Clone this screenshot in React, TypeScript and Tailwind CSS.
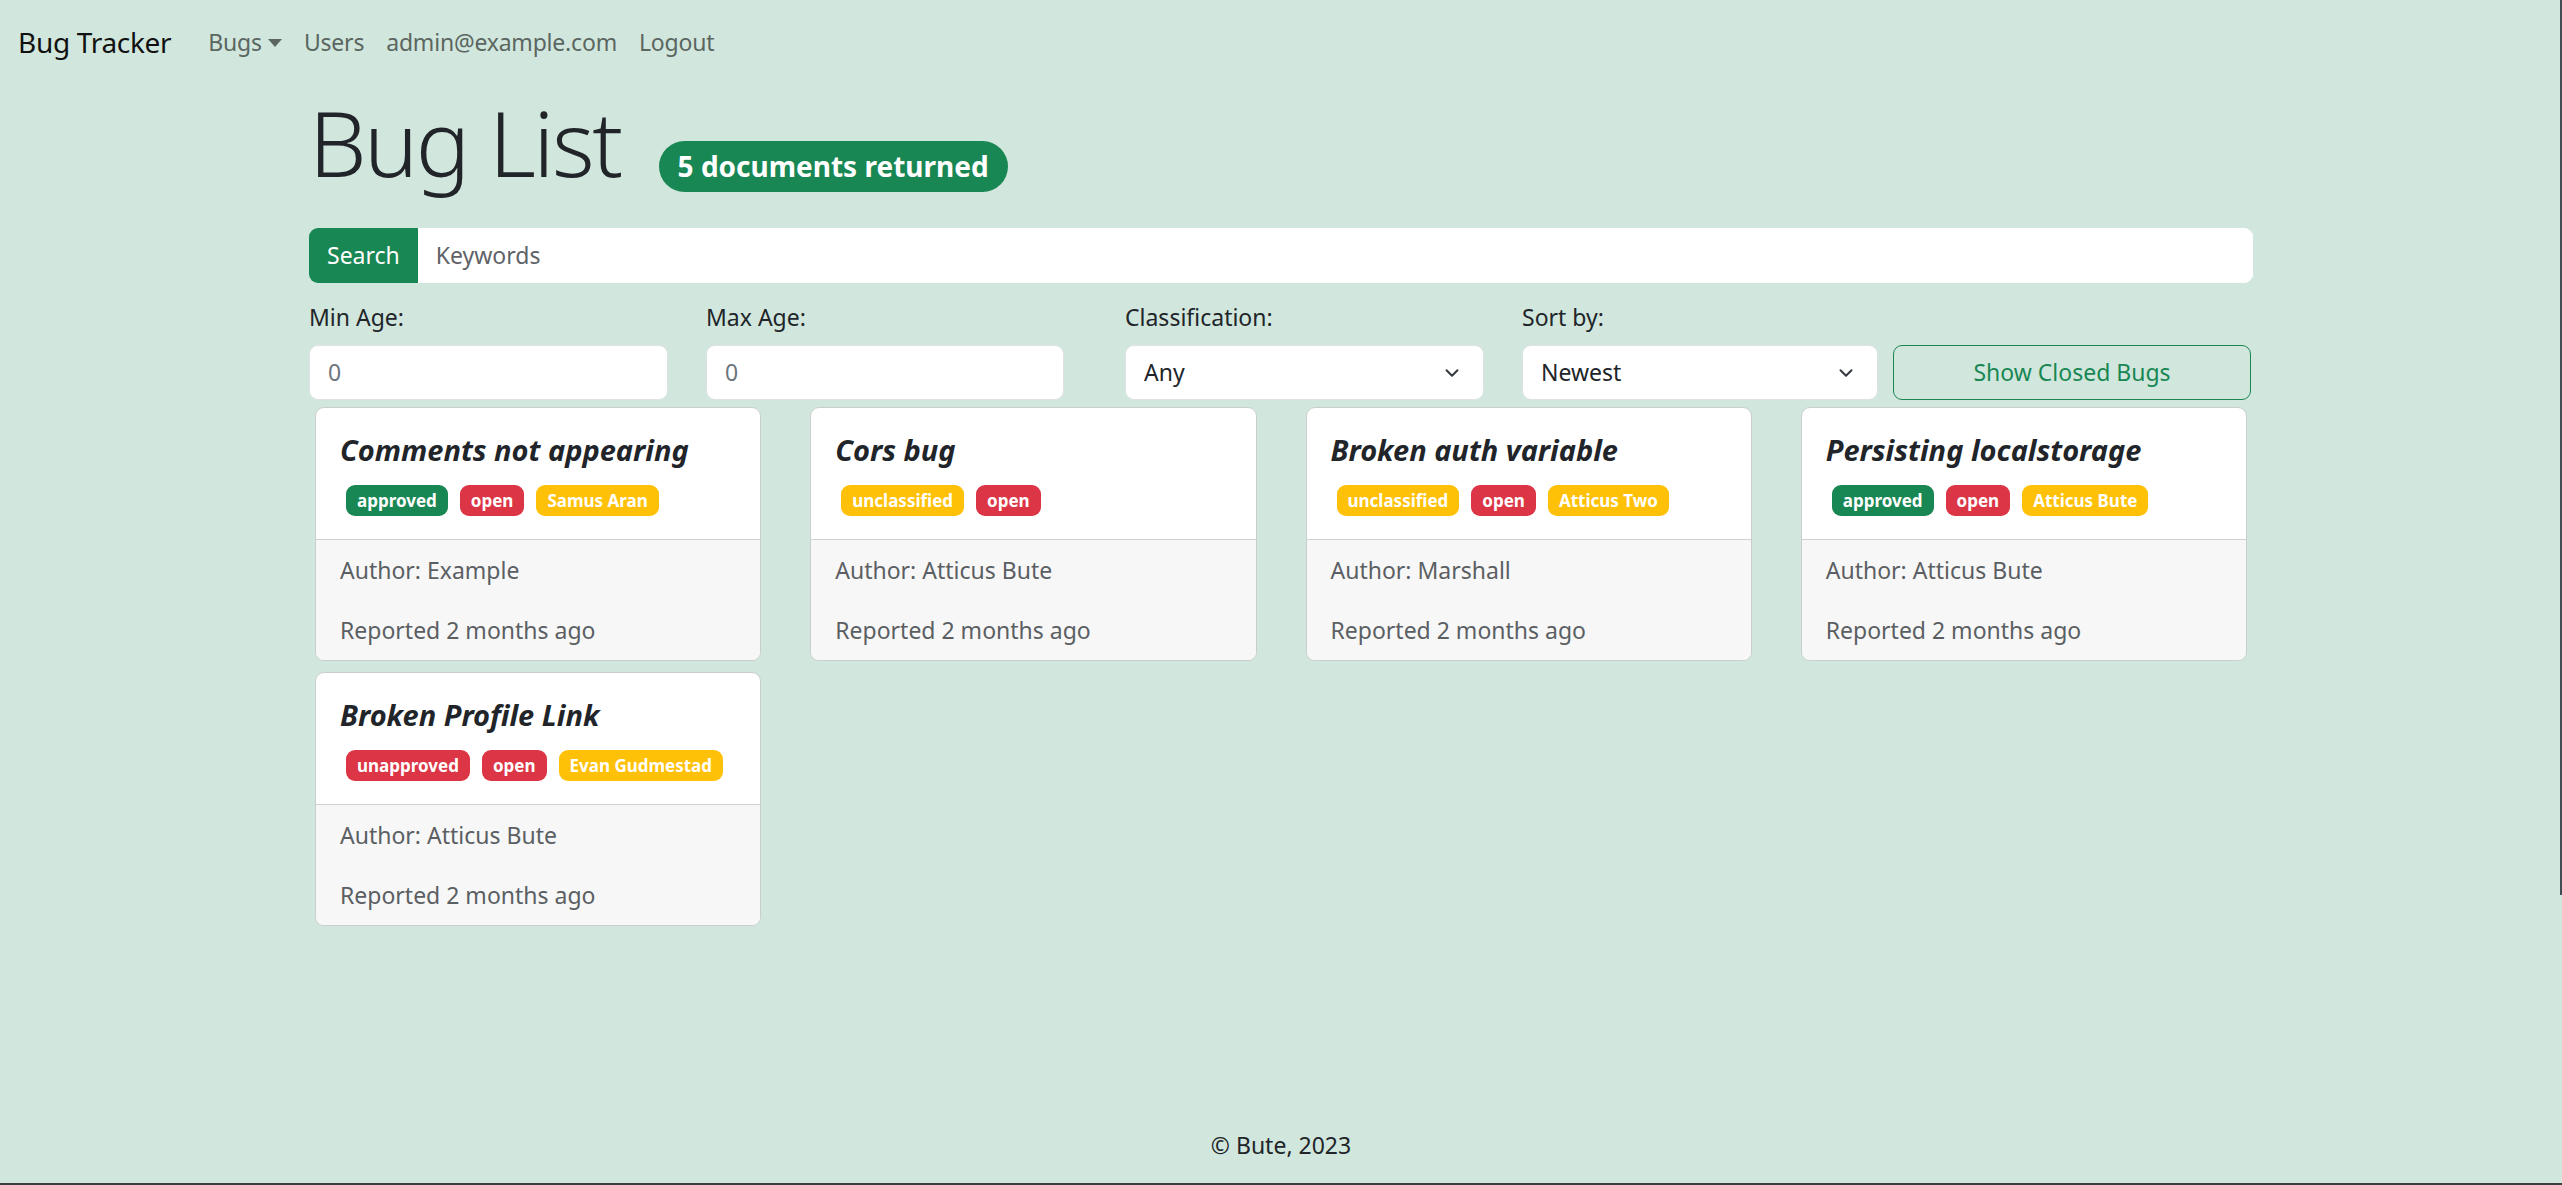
import { ChevronDown } from 'lucide-react';

type Tag = { label: string; color: 'green' | 'red' | 'yellow' };

type Bug = {
  title: string;
  tags: Tag[];
  author: string;
};

const bugs: Bug[] = [
  {
    title: 'Comments not appearing',
    tags: [
      { label: 'approved', color: 'green' },
      { label: 'open', color: 'red' },
      { label: 'Samus Aran', color: 'yellow' },
    ],
    author: 'Example',
  },
  {
    title: 'Cors bug',
    tags: [
      { label: 'unclassified', color: 'yellow' },
      { label: 'open', color: 'red' },
    ],
    author: 'Atticus Bute',
  },
  {
    title: 'Broken auth variable',
    tags: [
      { label: 'unclassified', color: 'yellow' },
      { label: 'open', color: 'red' },
      { label: 'Atticus Two', color: 'yellow' },
    ],
    author: 'Marshall',
  },
  {
    title: 'Persisting localstorage',
    tags: [
      { label: 'approved', color: 'green' },
      { label: 'open', color: 'red' },
      { label: 'Atticus Bute', color: 'yellow' },
    ],
    author: 'Atticus Bute',
  },
  {
    title: 'Broken Profile Link',
    tags: [
      { label: 'unapproved', color: 'red' },
      { label: 'open', color: 'red' },
      { label: 'Evan Gudmestad', color: 'yellow' },
    ],
    author: 'Atticus Bute',
  },
];

const tagColors = {
  green: 'bg-[#198754]',
  red: 'bg-[#dc3545]',
  yellow: 'bg-[#ffc107]',
};

function Badge({ tag }: { tag: Tag }) {
  return (
    <span
      className={`${tagColors[tag.color]} inline-flex h-[31px] items-center rounded-[9px] px-[11px] text-[17px] font-bold leading-none text-white`}
    >
      {tag.label}
    </span>
  );
}

function BugCard({ bug }: { bug: Bug }) {
  return (
    <div className="overflow-hidden rounded-[9px] border border-[#c9ceca] bg-white">
      <div className="px-[24px] pt-[24px] pb-[23px]">
        <h5 className="mb-[17px] text-[29px] leading-[36px] font-bold italic text-[#212529]">{bug.title}</h5>
        <div className="flex gap-[12px] pl-[6px]">
          {bug.tags.map((t, i) => (
            <Badge key={i} tag={t} />
          ))}
        </div>
      </div>
      <div className="border-t border-[#cfd2d0] bg-[#f7f7f7] px-[24px] py-[12px] text-[23px] leading-[36px] text-[#5b5f63]">
        <p className="mb-[24px]">Author: {bug.author}</p>
        <p>Reported 2 months ago</p>
      </div>
    </div>
  );
}

function Field({ label, children, className }: { label: string; children: React.ReactNode; className?: string }) {
  return (
    <div className={className}>
      <label className="mb-[10px] block text-[23px] leading-[36px] text-[#212529]">{label}</label>
      {children}
    </div>
  );
}

function Select({ value }: { value: string }) {
  return (
    <div className="flex h-[55px] items-center justify-between rounded-[9px] border border-[#dee2e6] bg-white pl-[18px] pr-[20px] text-[23px] text-[#212529]">
      <span>{value}</span>
      <ChevronDown className="h-[22px] w-[22px] text-[#343a40]" strokeWidth={2.2} />
    </div>
  );
}

export default function App() {
  return (
    <div
      className="flex min-h-screen flex-col border-b-2 border-[#3c3c3c] bg-[#d1e7dd]"
      style={{ fontFamily: '"Noto Sans", "Open Sans", sans-serif' }}
    >
      <div className="fixed top-0 right-0 h-[895px] w-[2px] bg-[#3f4f55]" />

      <nav className="flex h-[84px] items-center px-[18px]">
        <span className="mr-[37px] text-[28px] tracking-[-0.3px] text-[#111]">Bug Tracker</span>
        <div className="flex items-center gap-[22px] text-[23px] tracking-[-0.2px] text-[#5b6661]">
          <span className="flex items-center">
            Bugs
            <span className="ml-[6px] mt-[2px] h-0 w-0 border-x-[7px] border-t-[8px] border-x-transparent border-t-[#5b6661]" />
          </span>
          <span>Users</span>
          <span>admin@example.com</span>
          <span>Logout</span>
        </div>
      </nav>

      <main className="mx-auto w-[1944px]">
        <div className="mt-[3px] flex items-baseline">
          <h1 className="text-[91px] leading-[110px] font-light tracking-[-2.5px] text-[#212529]">Bug List</h1>
          <span className="ml-[38px] rounded-full bg-[#198754] px-[19px] py-[11.5px] text-[28px] leading-[28px] font-bold text-white">
            5 documents returned
          </span>
        </div>

        <div className="mt-[31px] flex h-[55px] overflow-hidden rounded-[9px]">
          <button className="bg-[#198754] px-[18px] text-[23px] text-white">Search</button>
          <input
            className="flex-1 border border-l-0 border-white bg-white px-[18px] text-[23px] text-[#212529] outline-none placeholder:text-[#5f6368]"
            placeholder="Keywords"
          />
        </div>

        <div className="mt-[16px] flex items-end">
          <Field label="Min Age:" className="w-[359px]">
            <div className="flex h-[55px] items-center rounded-[9px] border border-[#dee2e6] bg-white px-[18px] text-[23px] text-[#6c757d]">
              0
            </div>
          </Field>
          <Field label="Max Age:" className="ml-[38px] w-[358px]">
            <div className="flex h-[55px] items-center rounded-[9px] border border-[#dee2e6] bg-white px-[18px] text-[23px] text-[#6c757d]">
              0
            </div>
          </Field>
          <Field label="Classification:" className="ml-[61px] w-[359px]">
            <Select value="Any" />
          </Field>
          <Field label="Sort by:" className="ml-[38px] w-[356px]">
            <Select value="Newest" />
          </Field>
          <button className="ml-[15px] h-[55px] w-[358px] rounded-[9px] border-[1.5px] border-[#198754] text-[23px] text-[#198754]">
            Show Closed Bugs
          </button>
        </div>

        <div className="mt-[7px] grid grid-cols-4 gap-x-[49px] gap-y-[11px] px-[6px]">
          {bugs.map((b, i) => (
            <BugCard key={i} bug={b} />
          ))}
        </div>
      </main>

      <footer className="mt-auto pb-[20px] text-center text-[23px] leading-[36px] text-[#212529]">© Bute, 2023</footer>
    </div>
  );
}
